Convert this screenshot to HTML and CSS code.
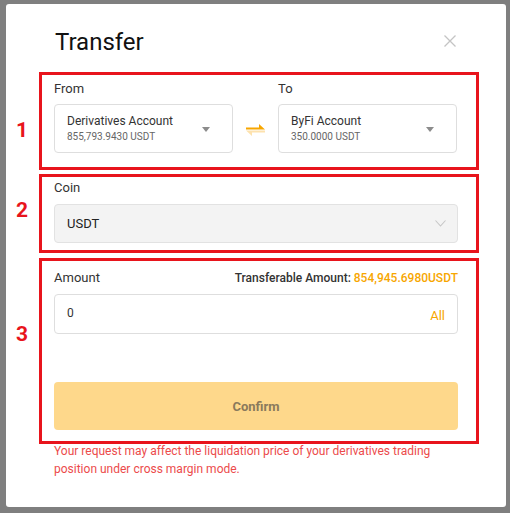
FILE: index.html
```html
<!DOCTYPE html>
<html lang="en">

<head>
    <meta charset="UTF-8">
    <meta name="viewport" content="width=device-width, initial-scale=1.0">
    <title>Transfer</title>
    <link rel="stylesheet" href="styles.css">
</head>

<body>
    <div class="modal">
        <div class="modal-head">
            <h1>Transfer</h1>
            <svg class="close" width="12" height="12" viewBox="0 0 12 12">
                <path d="M0.5 0.5 L11.5 11.5 M11.5 0.5 L0.5 11.5" stroke="#c4c4c4" stroke-width="1.3" fill="none"/>
            </svg>
        </div>

        <!-- Step 1: accounts -->
        <div class="step">
            <div class="step-num num-1">1</div>
            <div class="box box-1">
                <div class="accounts">
                    <div class="account-col">
                        <div class="label">From</div>
                        <div class="select">
                            <div class="select-text">
                                <div class="acc-name">Derivatives Account</div>
                                <div class="acc-bal">855,793.9430 USDT</div>
                            </div>
                            <span class="caret"></span>
                        </div>
                    </div>
                    <div class="swap">
                        <svg width="19" height="12" viewBox="0 0 19 12">
                            <polygon points="0,3.5 13,3.5 13,0 19,5.5 0,5.5" fill="#f7a600"/>
                            <polygon points="0,6.5 19,6.5 19,8.5 6,8.5 6,12" fill="#fde2ae"/>
                        </svg>
                    </div>
                    <div class="account-col">
                        <div class="label">To</div>
                        <div class="select">
                            <div class="select-text">
                                <div class="acc-name">ByFi Account</div>
                                <div class="acc-bal">350.0000 USDT</div>
                            </div>
                            <span class="caret"></span>
                        </div>
                    </div>
                </div>
            </div>
        </div>

        <!-- Step 2: coin -->
        <div class="step">
            <div class="step-num num-2">2</div>
            <div class="box box-2">
                <div class="label">Coin</div>
                <div class="coin-select">
                    <span>USDT</span>
                    <svg width="11" height="7" viewBox="0 0 11 7">
                        <path d="M0.5 0.5 L5.5 6 L10.5 0.5" stroke="#c6c6c6" stroke-width="1.1" fill="none"/>
                    </svg>
                </div>
            </div>
        </div>

        <!-- Step 3: amount -->
        <div class="step">
            <div class="step-num num-3">3</div>
            <div class="box box-3">
                <div class="amount-head">
                    <div class="label">Amount</div>
                    <div class="transferable">Transferable Amount: <span>854,945.6980USDT</span></div>
                </div>
                <div class="amount-input">
                    <span class="amount-val">0</span>
                    <span class="all">All</span>
                </div>
                <button class="confirm">Confirm</button>
            </div>
        </div>

        <div class="step">
            <div></div>
            <p class="warning">Your request may affect the liquidation price of your derivatives trading
                position under cross margin mode.</p>
        </div>
    </div>
</body>

</html>
```

FILE: styles.css
```css
body {
    margin: 0;
    background-color: #7f7f7f;
    font-family: Roboto, "Liberation Sans", sans-serif;
    color: #333;
}

.modal {
    width: 500px;
    height: 503px;
    margin: 4px 0 0 6px;
    background-color: white;
    border-radius: 3px;
}

.modal-head {
    height: 68px;
    display: flex;
    justify-content: space-between;
    align-items: flex-start;
    padding: 0 50px 0 49px;
    box-sizing: border-box;
}

.modal-head h1 {
    margin: 24px 0 0 0;
    font-size: 24px;
    line-height: 28px;
    font-weight: 400;
    color: #111;
}

.close {
    margin-top: 31px;
}

/* Annotated steps */
.step {
    display: grid;
    grid-template-columns: 33px 440px;
}

.step-num {
    padding-left: 10px;
    font-size: 21px;
    line-height: 20px;
    font-weight: bold;
    color: #e8141c;
}

.num-1 {
    padding-top: 48px;
}

.num-2 {
    padding-top: 26px;
}

.num-3 {
    padding-top: 66px;
}

.box {
    border: 3px solid #e8141c;
    padding: 0 18px 0 12px;
}

.box-1 {
    padding-top: 5px;
    padding-bottom: 14px;
    margin-bottom: 4px;
}

.box-2 {
    padding-top: 2px;
    padding-bottom: 7px;
    margin-bottom: 5px;
}

.box-3 {
    padding-top: 8px;
    padding-bottom: 11px;
}

.label {
    font-size: 13px;
    line-height: 18px;
    color: #333;
    margin-bottom: 7px;
}

.box-1 .label {
    margin-bottom: 6px;
}

/* Accounts */
.accounts {
    display: flex;
    align-items: flex-end;
}

.account-col {
    width: 179px;
}

.select {
    height: 49px;
    box-sizing: border-box;
    border: 1px solid #dedede;
    border-radius: 4px;
    padding: 0 22px 0 12px;
    display: flex;
    align-items: center;
    justify-content: space-between;
}

.acc-name {
    font-size: 12px;
    line-height: 15px;
    color: #333;
}

.acc-bal {
    font-size: 10px;
    line-height: 14px;
    color: #666;
    margin-top: 1px;
}

.caret {
    width: 0;
    height: 0;
    border-left: 4px solid transparent;
    border-right: 4px solid transparent;
    border-top: 5px solid #8c8c8c;
    margin-top: 2px;
}

.swap {
    width: 45px;
    height: 49px;
    display: flex;
    align-items: center;
    justify-content: center;
    padding-top: 3px;
    box-sizing: border-box;
}

/* Coin */
.coin-select {
    height: 39px;
    box-sizing: border-box;
    background-color: #f3f3f3;
    border: 1px solid #e2e2e2;
    border-radius: 4px;
    padding: 0 11px 0 12px;
    display: flex;
    align-items: center;
    justify-content: space-between;
    font-size: 13px;
    color: #222;
}

/* Amount */
.amount-head {
    display: flex;
    justify-content: space-between;
    align-items: baseline;
}

.transferable {
    font-size: 12px;
    font-weight: 500;
    color: #333;
}

.transferable span {
    color: #f7a600;
}

.amount-input {
    height: 40px;
    box-sizing: border-box;
    border: 1px solid #dedede;
    border-radius: 4px;
    padding: 0 12px 0 12px;
    display: flex;
    align-items: center;
    justify-content: space-between;
}

.amount-val {
    font-size: 12px;
    color: #333;
    margin-top: -3px;
}

.all {
    font-size: 13px;
    color: #f7a600;
    margin-top: 2px;
}

.confirm {
    display: block;
    width: 100%;
    height: 48px;
    margin-top: 48px;
    border: none;
    border-radius: 4px;
    background-color: #fed88b;
    font-family: inherit;
    font-size: 13px;
    font-weight: bold;
    color: #8a7a5c;
}

.warning {
    margin: -2px 0 0 0;
    padding-left: 15px;
    padding-right: 30px;
    font-size: 12px;
    line-height: 18px;
    color: #ec4b4b;
}
```
